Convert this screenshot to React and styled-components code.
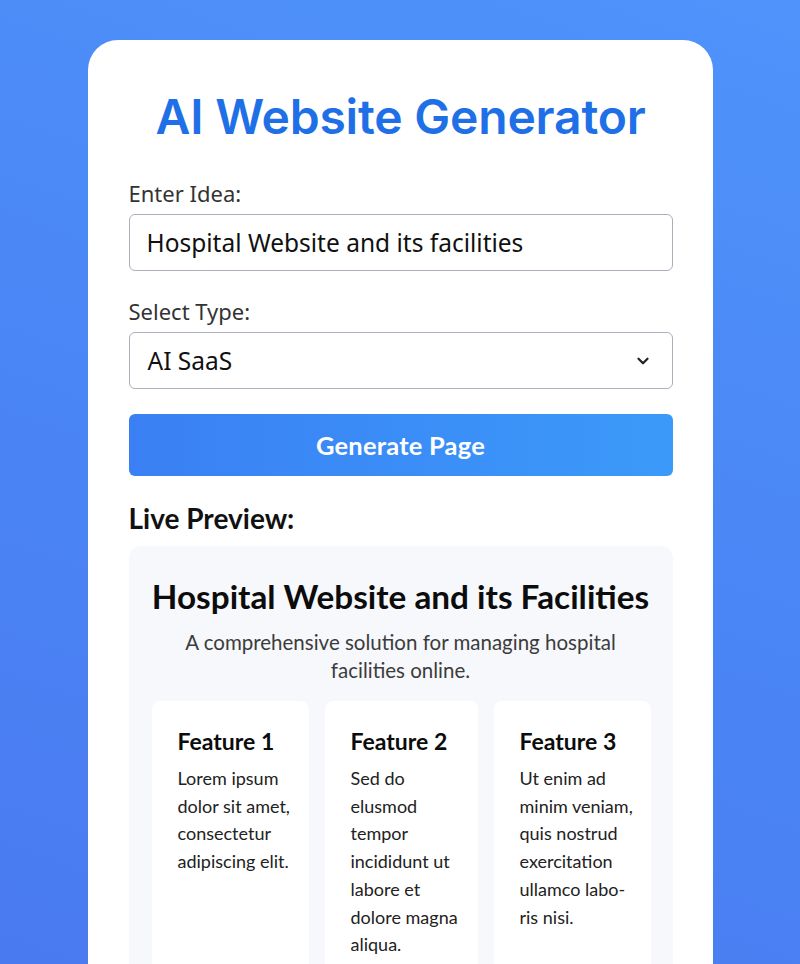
import React, { useState } from 'react';
import styled, { createGlobalStyle } from 'styled-components';

const GlobalStyle = createGlobalStyle`
  html, body {
    margin: 0;
    padding: 0;
    height: 100%;
  }
  body {
    background: linear-gradient(200deg, #4f93fb 0%, #4a86f5 50%, #4a7af0 100%);
    font-family: 'Lato', 'Noto Sans', sans-serif;
    overflow: hidden;
  }
`;

const Page = styled.div`
  min-height: 964px;
  padding-top: 40px;
  box-sizing: border-box;
`;

const Card = styled.div`
  width: 625px;
  margin: 0 auto;
  background: #fff;
  border-radius: 30px 30px 0 0;
  padding: 48px 40px 40px 41px;
  box-sizing: border-box;
  min-height: 924px;
`;

const Title = styled.h1`
  margin: 0 0 32px;
  text-align: center;
  color: #1f6fe6;
  font-family: 'Inter', 'Noto Sans', sans-serif;
  font-weight: 600;
  font-size: 48px;
  letter-spacing: -0.2px;
  line-height: 58px;
`;

const Field = styled.div`
  display: flex;
  flex-direction: column;
  gap: 6px;
  margin-bottom: 25px;
`;

const Label = styled.label`
  font-family: 'Noto Sans', sans-serif;
  font-size: 22px;
  color: #333;
  line-height: 30px;
`;

const Input = styled.input`
  height: 57px;
  box-sizing: border-box;
  border: 1px solid #a9b0bb;
  border-radius: 6px;
  padding: 0 17px;
  font-family: 'Noto Sans', sans-serif;
  font-size: 24.5px;
  color: #111;
  outline: none;
`;

const SelectWrap = styled.div`
  height: 57px;
  box-sizing: border-box;
  border: 1px solid #a9b0bb;
  border-radius: 6px;
  padding: 0 20px 0 18px;
  display: flex;
  align-items: center;
  justify-content: space-between;
  font-family: 'Noto Sans', sans-serif;
  font-size: 24.5px;
  color: #111;
`;

const Button = styled.button`
  display: block;
  width: 100%;
  height: 62px;
  border: none;
  border-radius: 6px;
  background: linear-gradient(90deg, #3a80f4 0%, #3b9af9 100%);
  color: #fff;
  font-family: 'Lato', sans-serif;
  font-weight: 700;
  font-size: 25.5px;
  letter-spacing: 0.2px;
  cursor: pointer;
`;

const PreviewLabel = styled.h2`
  margin: 26px 0 12px;
  font-family: 'Lato', sans-serif;
  font-weight: 700;
  font-size: 28px;
  color: #111;
  line-height: 32px;
`;

const Preview = styled.div`
  background: #f6f8fb;
  border-radius: 12px;
  padding: 30px 23px 0;
`;

const PreviewTitle = styled.h3`
  margin: 0 0 12px;
  text-align: center;
  font-family: 'Lato', sans-serif;
  font-weight: 700;
  font-size: 33.3px;
  line-height: 40px;
  color: #0c0c0c;
`;

const PreviewText = styled.p`
  margin: 0 auto 17px;
  max-width: 470px;
  text-align: center;
  font-size: 20.5px;
  line-height: 28px;
  color: #3c3c3c;
`;

const Features = styled.div`
  display: grid;
  grid-template-columns: 157px 153px 157px;
  gap: 16px;
`;

const Feature = styled.div`
  background: #fff;
  border-radius: 8px;
  padding: 26px 15px 40px 26px;
  min-height: 270px;
`;

const FeatureTitle = styled.h4`
  margin: 0 0 10px;
  font-weight: 700;
  font-size: 23px;
  line-height: 28px;
  color: #0c0c0c;
`;

const FeatureText = styled.p`
  margin: 0;
  font-size: 18px;
  line-height: 27.7px;
  color: #222;
`;

const Chevron = () => (
  <svg width="18" height="18" viewBox="0 0 24 24" fill="none" stroke="#222" strokeWidth="3" strokeLinecap="round" strokeLinejoin="round">
    <path d="M6 9l6 6 6-6" />
  </svg>
);

const features = [
  { title: 'Feature 1', text: 'Lorem ipsum dolor sit amet, consectetur adipiscing elit.' },
  { title: 'Feature 2', text: 'Sed do elusmod tempor incididunt ut labore et dolore magna aliqua.' },
  { title: 'Feature 3', text: 'Ut enim ad minim veniam, quis nostrud exercitation ullamco labo\u00ADris nisi.' },
];

const App = () => {
  const [idea, setIdea] = useState('Hospital Website and its facilities');

  return (
    <>
      <GlobalStyle />
      <Page>
        <Card>
          <Title>AI Website Generator</Title>
          <Field>
            <Label>Enter Idea:</Label>
            <Input value={idea} onChange={(e) => setIdea(e.target.value)} />
          </Field>
          <Field>
            <Label>Select Type:</Label>
            <SelectWrap>
              <span>AI SaaS</span>
              <Chevron />
            </SelectWrap>
          </Field>
          <Button>Generate Page</Button>
          <PreviewLabel>Live Preview:</PreviewLabel>
          <Preview>
            <PreviewTitle>Hospital Website and its Facilities</PreviewTitle>
            <PreviewText>A comprehensive solution for managing hospital facilities online.</PreviewText>
            <Features>
              {features.map((f) => (
                <Feature key={f.title}>
                  <FeatureTitle>{f.title}</FeatureTitle>
                  <FeatureText>{f.text}</FeatureText>
                </Feature>
              ))}
            </Features>
          </Preview>
        </Card>
      </Page>
    </>
  );
};

export default App;
